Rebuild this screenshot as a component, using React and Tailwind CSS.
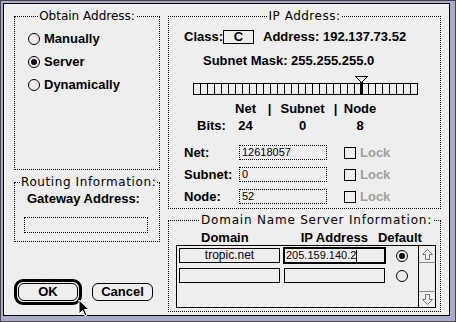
import React from 'react';

const geneva = "font-['DejaVu_Sans',sans-serif] font-normal";

const Group = ({ title, className = '', titleClass = '', children }) => (
  <div className={`relative border border-dotted border-black ${className}`}>
    <span
      className={`absolute top-[-8px] bg-[#eeeeee] px-[1px] text-[12px] leading-[14px] whitespace-nowrap ${geneva} ${titleClass}`}
    >
      {title}
    </span>
    {children}
  </div>
);

const Radio = ({ on }) => (
  <div className="w-[12px] h-[12px] shrink-0 rounded-full border border-black flex items-center justify-center">
    {on && <div className="w-[6px] h-[6px] rounded-full bg-black" />}
  </div>
);

const Arrow = ({ down }) => (
  <svg width="11" height="11" viewBox="0 0 11 11" className={down ? 'rotate-180' : ''}>
    <path d="M5.5 0.5 L10.5 5.5 L7.5 5.5 L7.5 10.5 L3.5 10.5 L3.5 5.5 L0.5 5.5 Z" fill="none" stroke="#777" />
  </svg>
);

const FieldRow = ({ label, value }) => (
  <div className="flex items-center h-[15px]">
    <span className="w-[55px] ml-[13px]">{label}</span>
    <div className="w-[88px] h-[15px] border border-dotted border-black pl-[2px] text-[11px] leading-[13px] font-normal font-['Liberation_Sans',sans-serif]">
      {value}
    </div>
    <div className="ml-[17px] w-[12px] h-[12px] border border-black" />
    <span className="ml-[4px] text-[#a0a0a0]">Lock</span>
  </div>
);

export default function App() {
  const cells = Array.from({ length: 32 }, (_, i) => i);

  return (
    <div className="relative w-[456px] h-[322px] bg-[#aaaacc] border border-[#444] pl-[2px] pt-[2px] pr-[5px] pb-[5px] flex font-['Liberation_Sans',Arial,sans-serif] text-[13px] font-bold leading-[16px] text-black">
      <div className="flex-1 border border-black bg-[#eeeeee] flex pl-[10px] pt-[12px] gap-[8px]">
        {/* left column */}
        <div className="w-[146px] flex flex-col">
          <Group title="Obtain Address:" className="h-[154px] pt-[10px] pl-[13px] flex flex-col" titleClass="left-1/2 -translate-x-1/2">
            {[['Manually', false], ['Server', true], ['Dynamically', false]].map(([t, on]) => (
              <div key={t} className="h-[23px] flex items-center gap-[4px]">
                <Radio on={on} />
                <span>{t}</span>
              </div>
            ))}
          </Group>

          <Group title="Routing Information:" className="mt-[12px] h-[60px] pt-[8px]" titleClass="left-[5px] tracking-[0.6px]">
            <div className="pl-[12px]">Gateway Address:</div>
            <div className="mt-[10px] ml-[9px] w-[124px] h-[16px] border border-dotted border-black" />
          </Group>

          <div className="mt-[37px] flex items-center">
            <div className="w-[68px] h-[26px] border-[3px] border-black rounded-[9px] p-[1px]">
              <div className="w-full h-full border border-black rounded-[6px] flex items-center justify-center">OK</div>
            </div>
            <div className="ml-[10px] w-[61px] h-[18px] border border-black rounded-[6px] flex items-center justify-center">
              Cancel
            </div>
          </div>
        </div>

        {/* right column */}
        <div className="w-[273px] flex flex-col">
          <Group title="IP Address:" className="h-[193px] pt-[12px] pl-[15px]" titleClass="left-1/2 -translate-x-1/2 tracking-[0.5px]">
            <div className="flex items-center h-[16px]">
              <span>Class:</span>
              <div className="w-[31px] h-[14px] border border-black flex items-center justify-center">C</div>
              <span className="ml-[9px]">Address: 192.137.73.52</span>
            </div>
            <div className="mt-[8px] pl-[19px]">Subnet Mask: 255.255.255.0</div>

            <div className="relative mt-[14px] ml-[9px] w-[225px] h-[12px] border-y border-r border-black flex">
              {cells.map((i) => (
                <div key={i} className="w-[7px] h-full shrink-0 border-l border-black" />
              ))}
              <svg className="absolute left-[162px] top-[-8px]" width="13" height="19" viewBox="0 0 13 19">
                <path d="M0 0.5 H13 M0.5 0.5 L6.5 6.5 L12.5 0.5" fill="none" stroke="#000" />
                <rect x="5" y="6" width="3" height="13" fill="#000" />
              </svg>
            </div>

            <div className="mt-[6px] ml-[13px] flex">
              <span className="w-[26px]" />
              <span className="w-[45px] text-center">Net</span>
              <span className="w-[3px] flex justify-center">|</span>
              <span className="w-[63px] text-center">Subnet</span>
              <span className="w-[3px] flex justify-center">|</span>
              <span className="w-[46px] text-center">Node</span>
            </div>
            <div className="mt-[1px] ml-[13px] flex">
              <span className="w-[26px] whitespace-nowrap">Bits:</span>
              <span className="w-[45px] text-center">24</span>
              <span className="w-[3px]" />
              <span className="w-[63px] text-center">0</span>
              <span className="w-[3px]" />
              <span className="w-[46px] text-center">8</span>
            </div>

            <div className="mt-[11px] flex flex-col gap-[7px] -ml-[13px]">
              <FieldRow label="Net:" value="12618057" />
              <FieldRow label="Subnet:" value="0" />
              <FieldRow label="Node:" value="52" />
            </div>
          </Group>

          <Group title="Domain Name Server Information:" className="mt-[11px] h-[92px] pt-[10px]" titleClass="left-[31px] tracking-[0.8px]">
            <div className="flex leading-[14px]">
              <span className="ml-[32px]">Domain</span>
              <span className="ml-[52px]">IP Address</span>
              <span className="ml-[10px]">Default</span>
            </div>
            <div className="ml-[7px] w-[260px] h-[63px] border border-black flex">
              <div className="flex-1 flex flex-col pt-[2px] pl-[2px] gap-[5px] font-normal">
                <div className="flex items-center h-[15px]">
                  <div className="w-[101px] h-[15px] border border-black text-center text-[12px] leading-[13px]">tropic.net</div>
                  <div className="ml-[3px] w-[103px] h-[17px] border-2 border-black pl-[1px] flex items-center text-[11px] leading-[13px]">
                    205.159.140.2
                    <span className="w-[1px] h-[12px] bg-black" />
                  </div>
                  <div className="ml-[10px]">
                    <Radio on />
                  </div>
                </div>
                <div className="flex items-center h-[15px]">
                  <div className="w-[101px] h-[15px] border border-black" />
                  <div className="ml-[4px] w-[101px] h-[15px] border border-black" />
                  <div className="ml-[11px]">
                    <Radio />
                  </div>
                </div>
              </div>
              <div className="w-[17px] border-l border-black flex flex-col justify-between">
                <div className="h-[17px] border-b border-[#888] flex items-center justify-center">
                  <Arrow />
                </div>
                <div className="h-[16px] border-t border-[#888] flex items-center justify-center">
                  <Arrow down />
                </div>
              </div>
            </div>
          </Group>
        </div>
      </div>

      {/* mouse pointer */}
      <svg className="absolute left-[77px] top-[298px]" width="12" height="19" viewBox="0 0 12 19">
        <path d="M1 1 L1 15 L4.5 11.5 L7 17 L9 16 L6.5 10.5 L11 10.5 Z" fill="#000" stroke="#fff" strokeWidth="1" strokeLinejoin="miter" />
      </svg>
    </div>
  );
}
